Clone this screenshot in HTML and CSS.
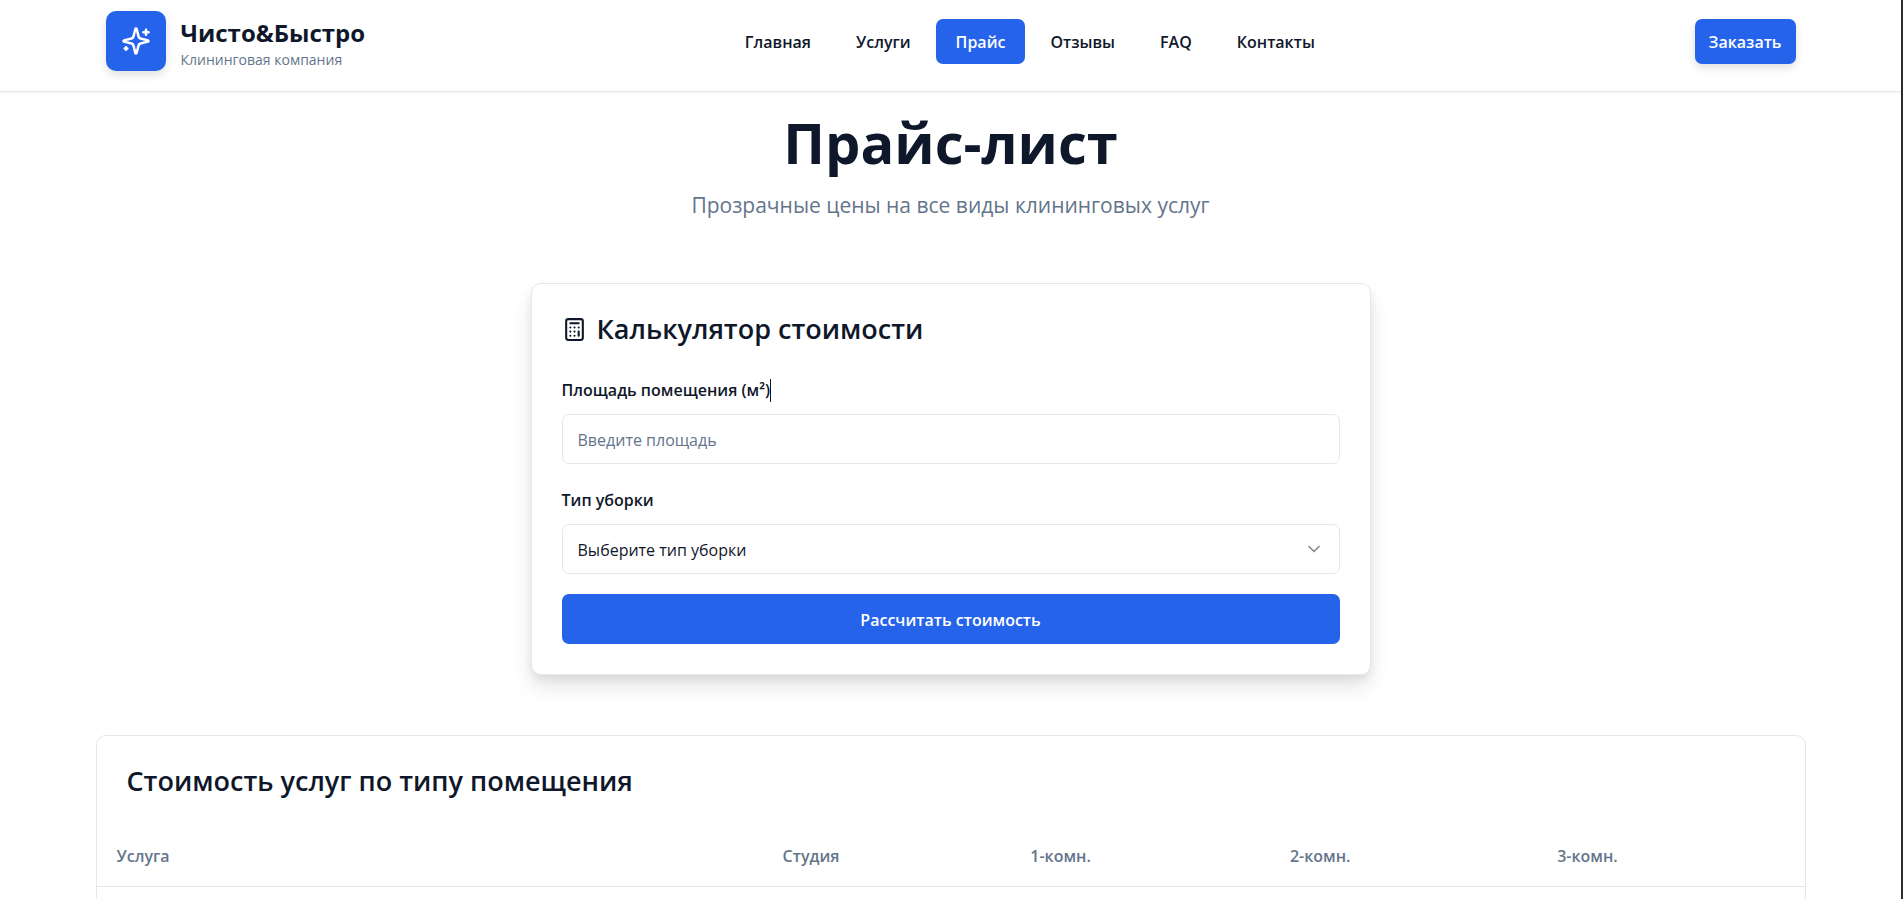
FILE: index.html
```
<!DOCTYPE html>
<html lang="ru">
<head>
    <meta charset="UTF-8">
    <meta name="viewport" content="width=device-width, initial-scale=1.0">
    <title>Прайс-лист</title>
    <link rel="stylesheet" href="styles.css">
</head>
<body>

<!-- Header -->
<header class="header">
    <div class="header-inner">
        <a href="#" class="logo">
            <span class="logo-icon">
                <svg width="30" height="30" viewBox="0 0 24 24" fill="none" stroke="currentColor" stroke-width="2" stroke-linecap="round" stroke-linejoin="round">
                    <path d="M9.937 15.5A2 2 0 0 0 8.5 14.063l-6.135-1.582a.5.5 0 0 1 0-.962L8.5 9.936A2 2 0 0 0 9.937 8.5l1.582-6.135a.5.5 0 0 1 .963 0L14.063 8.5A2 2 0 0 0 15.5 9.937l6.135 1.581a.5.5 0 0 1 0 .964L15.5 14.063a2 2 0 0 0-1.437 1.437l-1.582 6.135a.5.5 0 0 1-.963 0z"/>
                    <path d="M20 3v4"/>
                    <path d="M22 5h-4"/>
                    <path d="M4 17v2"/>
                    <path d="M5 18H3"/>
                </svg>
            </span>
            <span class="logo-text">
                <span class="logo-name">Чисто&amp;Быстро</span>
                <span class="logo-sub">Клининговая компания</span>
            </span>
        </a>

        <nav class="nav">
            <a href="#">Главная</a>
            <a href="#">Услуги</a>
            <a href="#" class="active">Прайс</a>
            <a href="#">Отзывы</a>
            <a href="#">FAQ</a>
            <a href="#">Контакты</a>
        </nav>

        <button type="button" class="order-btn">Заказать</button>
    </div>
</header>

<main class="container">
    <div class="page-title">
        <h1>Прайс-лист</h1>
        <p>Прозрачные цены на все виды клининговых услуг</p>
    </div>

    <!-- Calculator -->
    <form class="card calculator">
        <h2>
            <svg width="25" height="25" viewBox="0 0 24 24" fill="none" stroke="currentColor" stroke-width="2" stroke-linecap="round" stroke-linejoin="round">
                <rect width="16" height="20" x="4" y="2" rx="2"/>
                <path d="M8 6h8"/>
                <path d="M16 14v4"/>
                <path d="M16 10h.01"/>
                <path d="M12 10h.01"/>
                <path d="M8 10h.01"/>
                <path d="M12 14h.01"/>
                <path d="M8 14h.01"/>
                <path d="M12 18h.01"/>
                <path d="M8 18h.01"/>
            </svg>
            Калькулятор стоимости
        </h2>

        <div class="field">
            <label for="area">Площадь помещения (м²)<span class="caret"></span></label>
            <input type="text" id="area" placeholder="Введите площадь">
        </div>

        <div class="field">
            <label for="type">Тип уборки</label>
            <div class="select-wrap">
                <select id="type">
                    <option>Выберите тип уборки</option>
                </select>
                <svg class="chevron" width="20" height="20" viewBox="0 0 24 24" fill="none" stroke="currentColor" stroke-width="2" stroke-linecap="round" stroke-linejoin="round">
                    <path d="m6 9 6 6 6-6"/>
                </svg>
            </div>
        </div>

        <button type="button" class="submit-btn">Рассчитать стоимость</button>
    </form>

    <!-- Price table -->
    <section class="card prices">
        <h2>Стоимость услуг по типу помещения</h2>
        <table>
            <thead>
                <tr>
                    <th class="col-service">Услуга</th>
                    <th class="col-studio">Студия</th>
                    <th class="col-one">1-комн.</th>
                    <th>2-комн.</th>
                    <th>3-комн.</th>
                </tr>
            </thead>
        </table>
    </section>
</main>

</body>
</html>
```
FILE: styles.css
```
* {
    box-sizing: border-box;
}

body {
    margin: 0;
    min-height: 100vh;
    font-family: 'Open Sans', 'Noto Sans', sans-serif;
    font-size: 16px;
    color: #0f172a;
    background-color: #fff;
    border-right: 2px solid #2b2b2b;
}

h1, h2, p {
    margin: 0;
}

button, input, select {
    font-family: inherit;
    font-size: inherit;
}

/* Header */
.header {
    border-bottom: 1px solid #e2e8f0;
    box-shadow: 0 1px 2px rgba(0, 0, 0, 0.05);
}

.header-inner {
    display: flex;
    align-items: center;
    justify-content: space-between;
    max-width: 1750px;
    margin: 0 auto;
    padding: 11px 30px 20px;
}

.logo {
    display: flex;
    align-items: center;
    gap: 15px;
    color: inherit;
    text-decoration: none;
}

.logo-icon {
    display: flex;
    align-items: center;
    justify-content: center;
    width: 60px;
    height: 60px;
    color: #fff;
    background-color: #2563eb;
    border-radius: 10px;
    box-shadow: 0 4px 8px rgba(0, 0, 0, 0.12);
}

.logo-text {
    display: flex;
    flex-direction: column;
    padding-top: 3px;
}

.logo-name {
    font-size: 24px;
    line-height: 35px;
    font-weight: 700;
}

.logo-sub {
    font-size: 14px;
    line-height: 20px;
    color: #64748b;
}

.nav {
    display: flex;
    gap: 5px;
}

.nav a {
    padding: 11px 20px 9px;
    line-height: 25px;
    font-weight: 600;
    color: inherit;
    text-decoration: none;
    border-radius: 7px;
}

.nav a.active {
    color: #fff;
    background-color: #2563eb;
}

.order-btn {
    height: 45px;
    padding: 2px 14px 0;
    font-weight: 600;
    color: #fff;
    background-color: #2563eb;
    border: none;
    border-radius: 7px;
    box-shadow: 0 4px 8px rgba(0, 0, 0, 0.12);
    cursor: pointer;
}

/* Page */
.container {
    max-width: 1750px;
    margin: 0 auto;
    padding: 20px;
}

.page-title {
    margin-bottom: 60px;
    text-align: center;
}

.page-title h1 {
    font-size: 56px;
    line-height: 60px;
    font-weight: 700;
}

.page-title p {
    margin-top: 16px;
    font-size: 21px;
    line-height: 35px;
    color: #64748b;
}

.card {
    background-color: #fff;
    border: 1px solid #e2e8f0;
    border-radius: 10px;
}

.card h2 {
    font-size: 27px;
    line-height: 30px;
    font-weight: 600;
}

/* Calculator */
.calculator {
    display: flex;
    flex-direction: column;
    gap: 20px;
    max-width: 840px;
    margin: 0 auto 60px;
    padding: 30px;
    box-shadow: 0 12px 20px rgba(0, 0, 0, 0.1), 0 5px 8px rgba(0, 0, 0, 0.06);
}

.calculator h2 {
    display: flex;
    align-items: center;
    gap: 10px;
    margin-bottom: 10px;
}

.field label {
    display: flex;
    align-items: center;
    margin-bottom: 8px;
    line-height: 32px;
    font-weight: 600;
}

.caret {
    width: 1px;
    height: 23px;
    background-color: #0f172a;
}

.field input,
.field select {
    display: block;
    width: 100%;
    height: 50px;
    padding: 2px 15px 0;
    color: #0f172a;
    background-color: #fff;
    border: 1px solid #e2e8f0;
    border-radius: 7px;
    appearance: none;
}

.field input::placeholder {
    color: #64748b;
}

.select-wrap {
    position: relative;
}

.chevron {
    position: absolute;
    top: 15px;
    right: 16px;
    opacity: 0.5;
    pointer-events: none;
}

.submit-btn {
    height: 50px;
    padding: 2px 15px 0;
    font-weight: 600;
    color: #fff;
    background-color: #2563eb;
    border: none;
    border-radius: 7px;
    cursor: pointer;
}

/* Price table */
.prices h2 {
    padding: 30px;
}

.prices table {
    width: 100%;
    table-layout: fixed;
    border-collapse: collapse;
    margin-bottom: 60px;
}

.prices th {
    height: 60px;
    padding: 0 20px;
    text-align: left;
    font-weight: 600;
    color: #64748b;
    border-bottom: 1px solid #e2e8f0;
}

.col-service {
    width: 39%;
}

.col-studio {
    width: 14.5%;
}

.col-one {
    width: 15.2%;
}
```
